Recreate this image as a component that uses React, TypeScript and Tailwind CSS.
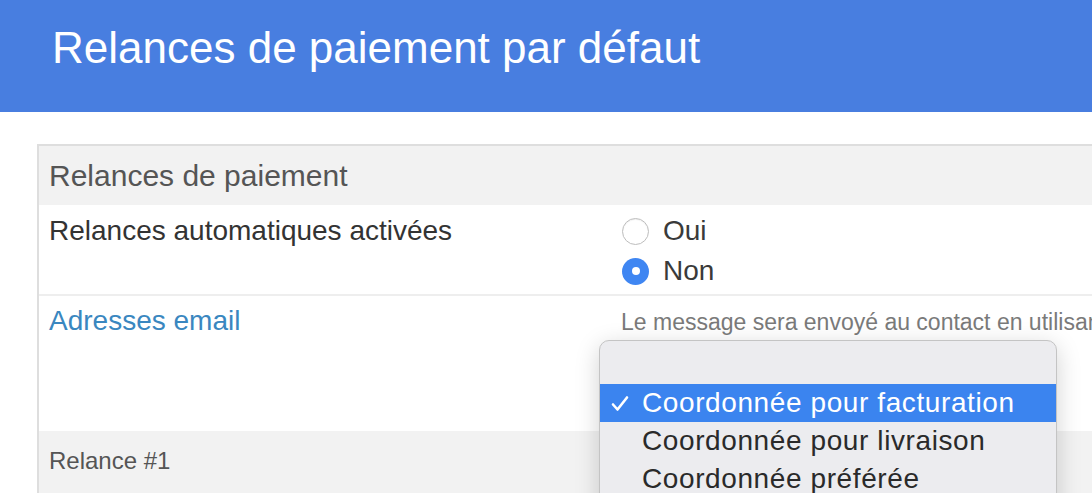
import React from 'react';

const options = ['Coordonnée pour facturation', 'Coordonnée pour livraison', 'Coordonnée préférée'];

function Radio({ checked, label }: { checked?: boolean; label: string }) {
  return (
    <label className="flex h-10 items-center gap-[14px]">
      {checked ? (
        <span className="flex h-[27px] w-[27px] items-center justify-center rounded-full bg-[#3f86f2]">
          <span className="h-2 w-2 rounded-full bg-white" />
        </span>
      ) : (
        <span className="h-[27px] w-[27px] rounded-full border border-[#bdbdbd] bg-white shadow-[inset_0_1px_1px_rgba(0,0,0,0.06)]" />
      )}
      <span className="text-[28px] leading-8 text-[#3a3a3a]">{label}</span>
    </label>
  );
}

export default function App() {
  return (
    <div className="relative h-[493px] w-[1092px] overflow-hidden bg-white font-['Liberation_Sans',Arial,sans-serif]">
      <header className="flex h-[112px] items-start bg-[#487ee0] px-[52px] pt-[23px]">
        <h1 className="text-[44px] leading-[50px] text-white">Relances de paiement par défaut</h1>
      </header>

      <div className="ml-[37px] mt-[32px] border-l-2 border-t-2 border-[#dedede]">
        <div className="h-[59px] bg-[#f2f2f2] px-[10px] pt-[12px]">
          <h2 className="text-[30px] leading-9 font-light text-[#555]">Relances de paiement</h2>
        </div>

        <div className="flex h-[91px] border-b-2 border-[#eeeeee]">
          <div className="w-[583px] shrink-0 px-[10px] pt-[10px] text-[28px] leading-8 text-[#333]">
            Relances automatiques activées
          </div>
          <div className="flex flex-col pt-[6px]">
            <Radio label="Oui" />
            <Radio label="Non" checked />
          </div>
        </div>

        <div className="flex h-[135px]">
          <div className="w-[582px] shrink-0 px-[10px] pt-[9px] text-[28px] leading-8 text-[#3a87c0]">
            Adresses email
          </div>
          <div className="whitespace-nowrap pt-[13px] text-[23px] leading-[26px] text-[#7a7a7a]">
            Le message sera envoyé au contact en utilisant l'adresse
          </div>
        </div>

        <div className="h-[70px] bg-[#f2f2f2] px-[10px] pt-[16px]">
          <h3 className="text-[24px] leading-7 font-light text-[#555]">Relance #1</h3>
        </div>
      </div>

      <div className="absolute left-[599px] top-[340px] h-[200px] w-[458px] rounded-[10px] border border-[#c4c4c4] bg-[#ececef] pt-[43px] shadow-[0_6px_24px_rgba(0,0,0,0.18)]">
        {options.map((opt, i) => (
          <div
            key={opt}
            className={`flex h-[38px] items-center text-[28px] tracking-[0.6px] ${i === 0 ? 'bg-[#3b84ef] text-white' : 'text-[#2a2a2a]'}`}
          >
            <span className="flex w-[42px] justify-end pr-[13px]">
              {i === 0 && (
                <svg width="18" height="17" viewBox="0 0 18 17" fill="none">
                  <path d="M2 9.5 L6.5 14.5 L16 2.5" stroke="white" strokeWidth="2.6" strokeLinecap="round" strokeLinejoin="round" />
                </svg>
              )}
            </span>
            <span>{opt}</span>
          </div>
        ))}
      </div>
    </div>
  );
}
